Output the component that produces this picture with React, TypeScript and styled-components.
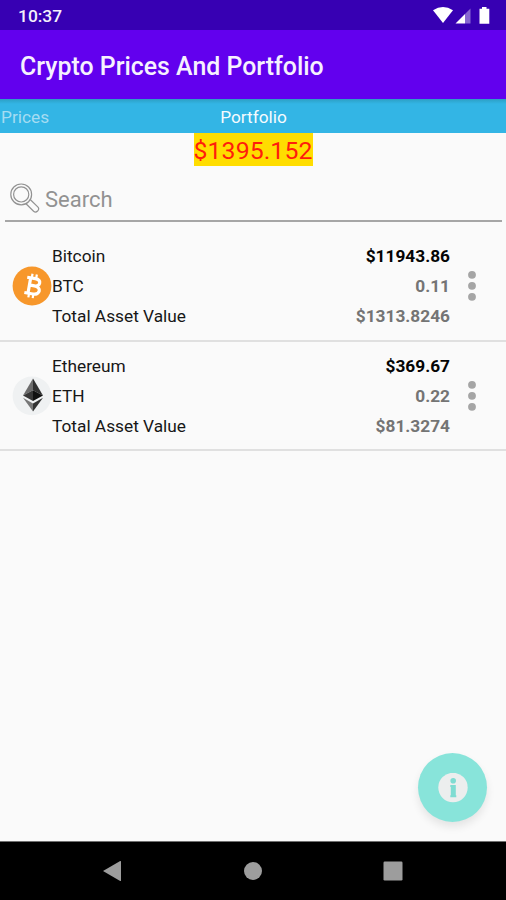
import React from "react";
import styled, { createGlobalStyle } from "styled-components";

const GlobalStyle = createGlobalStyle`
  * { box-sizing: border-box; }
  body { margin: 0; background: #fafafa; font-family: Roboto, sans-serif; }
`;

const Screen = styled.div`
  width: 506px;
  height: 900px;
  display: flex;
  flex-direction: column;
  overflow: hidden;
  background: #fafafa;
`;

const StatusBar = styled.header`
  height: 30px;
  flex: none;
  display: flex;
  align-items: center;
  justify-content: space-between;
  padding: 2px 14px 0 18px;
  background: #3700b3;
  color: #f4f0fb;
`;

const Clock = styled.span`
  font-size: 17.4px;
  line-height: 28px;
  font-weight: 500;
`;

const StatusIcons = styled.svg`
  display: block;
`;

const AppBar = styled.div`
  height: 69px;
  flex: none;
  display: flex;
  align-items: center;
  padding: 4px 20px 0;
  background: #6200ee;
`;

const Title = styled.h1`
  margin: 0;
  color: #f6f1fe;
  font-size: 24.9px;
  font-weight: 500;
  line-height: 32px;
`;

const TabStrip = styled.nav`
  height: 34px;
  flex: none;
  display: grid;
  grid-template-columns: 1fr auto 1fr;
  align-items: center;
  padding: 2px 0 0 1px;
  background: linear-gradient(#2c9fc4 0, #33b5e5 5px);
`;

const Tab = styled.span<{ $active?: boolean }>`
  color: ${(p) => (p.$active ? "#f5fbfe" : "#a5dcf2")};
  font-size: 17.3px;
  line-height: 20px;
`;

const Total = styled.div`
  align-self: center;
  flex: none;
  width: 119px;
  height: 33px;
  background: #ffdd00;
  color: #ff1d0c;
  font-size: 24.8px;
  line-height: 35px;
  letter-spacing: 0.1px;
  text-align: center;
  white-space: nowrap;
`;

const SearchField = styled.label`
  height: 56px;
  flex: none;
  display: flex;
  align-items: center;
  gap: 4px;
  margin: 0 4px 10px 5px;
  padding: 10px 0 0 5px;
  border-bottom: 2px solid #a6a6a6;
`;

const SearchInput = styled.input`
  flex: 1;
  border: 0;
  padding: 4px 0 0 1px;
  outline: 0;
  background: none;
  font: 22px/28px Roboto, sans-serif;
  &::placeholder { color: #929292; opacity: 1; }
`;

const AssetRow = styled.article`
  height: 109.7px;
  flex: none;
  display: grid;
  grid-template-columns: 40px 1fr auto 44px;
  align-items: center;
  padding: 0 12px;
  border-bottom: 2px solid #e0e0e0;
`;

const Lines = styled.div<{ $end?: boolean }>`
  display: flex;
  flex-direction: column;
  align-items: ${(p) => (p.$end ? "flex-end" : "flex-start")};
  padding-top: 1px;
`;

const Line = styled.span<{ $tone?: "strong" | "muted" }>`
  color: ${(p) => (p.$tone === "strong" ? "#050505" : p.$tone ? "#747474" : "#171717")};
  font-size: 17.3px;
  line-height: 30px;
  font-weight: ${(p) => (p.$tone ? 700 : 400)};
`;

const MenuButton = styled.button`
  border: 0;
  background: none;
  padding: 0;
  height: 40px;
  display: flex;
  align-items: center;
  justify-content: center;
`;

const Content = styled.main`
  position: relative;
  flex: 1;
  min-height: 0;
  display: flex;
  flex-direction: column;
`;

const InfoButton = styled.button`
  position: absolute;
  right: 19px;
  bottom: 19px;
  width: 69px;
  height: 69px;
  border: 0;
  padding: 0;
  border-radius: 50%;
  display: grid;
  place-items: center;
  background: #88e4da;
  box-shadow: 0 5px 8px rgba(0, 0, 0, 0.09);
`;

const NavigationBar = styled.footer`
  height: 59px;
  flex: none;
  display: flex;
  align-items: center;
  justify-content: space-between;
  padding: 0 103px 0 102px;
  border-top: 1px solid #707070;
  background: #000;
`;

const NavIcon = styled.svg`
  display: block;
  fill: #9d9d9d;
`;

const Bitcoin = () => (
  <svg width="40" height="40" viewBox="0 0 40 40">
    <circle cx="20" cy="20" r="19.4" fill="#f7972b" />
    <g transform="translate(20.8 20) rotate(10)" fill="none" stroke="#fff">
      <path d="M-7-7.7H1.2C8-7.7 7.8-.4 1.6-.4H-2.5M1.6-.4C9.4-.4 8.8 7.9 1.5 7.9H-7.2M-3.5-7.7V7.9" strokeWidth="3.2" />
      <path d="M-2.4-12V-7M2-12V-7M-2.4 7.5V12M2 7.5V12" strokeWidth="2.2" />
    </g>
  </svg>
);

const Ethereum = () => (
  <svg width="40" height="40" viewBox="0 0 40 40">
    <circle cx="20" cy="19.8" r="19.4" fill="#eff1f2" />
    <path d="M21 2.5 11 19.5 21 14.3Z" fill="#6c6c6c" />
    <path d="M21 2.5 31 19.5 21 14.3Z" fill="#303030" />
    <path d="M11 19.5 21 14.3V25Z" fill="#373737" />
    <path d="M31 19.5 21 14.3V25Z" fill="#111" />
    <path d="M11 21.8 21 27.5V35.5Z" fill="#777" />
    <path d="M31 21.8 21 27.5V35.5Z" fill="#333" />
  </svg>
);

const MoreDots = () => (
  <svg width="10" height="32" viewBox="0 0 10 32" fill="#a5a5a5">
    <circle cx="5" cy="4.8" r="3.9" />
    <circle cx="5" cy="15.8" r="3.9" />
    <circle cx="5" cy="26.8" r="3.9" />
  </svg>
);

const assets = [
  { name: "Bitcoin", symbol: "BTC", price: "$11943.86", amount: "0.11", value: "$1313.8246", Icon: Bitcoin },
  { name: "Ethereum", symbol: "ETH", price: "$369.67", amount: "0.22", value: "$81.3274", Icon: Ethereum },
];

export default function App() {
  return (
    <Screen>
      <GlobalStyle />
      <StatusBar>
        <Clock>10:37</Clock>
        <StatusIcons width="60" height="20" viewBox="0 0 60 20" fill="#fff">
          <path d="M1 4.2Q11-2.2 21 4.2L11 17Z" />
          <path d="M23.5 17.6 33 8V17.6Z" />
          <path d="M33 8 38.5 2.4V17.6H33Z" opacity=".4" />
          <path d="M47.5 2.8H50V1H54.5V2.8H57.3V17.7H47.5Z" />
        </StatusIcons>
      </StatusBar>
      <AppBar><Title>Crypto Prices And Portfolio</Title></AppBar>
      <TabStrip>
        <Tab>Prices</Tab>
        <Tab $active>Portfolio</Tab>
      </TabStrip>
      <Content>
        <Total>$1395.152</Total>
        <SearchField>
          <svg width="30" height="32" viewBox="0 0 30 32" fill="none" stroke="#929292" strokeWidth="1.2">
            <circle cx="11.2" cy="12.4" r="10.4" />
            <circle cx="11.2" cy="12.4" r="7.6" />
            <path d="M16 21.7 23.6 29.2Q25.6 30.9 27.6 29 29.6 27 28 25.1L20.2 17.5" strokeLinejoin="round" />
          </svg>
          <SearchInput placeholder="Search" />
        </SearchField>
        {assets.map(({ name, symbol, price, amount, value, Icon }) => (
          <AssetRow key={symbol}>
            <Icon />
            <Lines>
              <Line>{name}</Line>
              <Line>{symbol}</Line>
              <Line>Total Asset Value</Line>
            </Lines>
            <Lines $end>
              <Line $tone="strong">{price}</Line>
              <Line $tone="muted">{amount}</Line>
              <Line $tone="muted">{value}</Line>
            </Lines>
            <MenuButton aria-label="More"><MoreDots /></MenuButton>
          </AssetRow>
        ))}
        <InfoButton aria-label="Info">
          <svg width="30" height="30" viewBox="0 0 30 30">
            <circle cx="15" cy="14.5" r="14.7" fill="#eceeee" />
            <circle cx="15.2" cy="7.8" r="2.8" fill="#7fdcd2" />
            <path d="M12.3 12H17.8V22.3H18.3V24.2H12.3V22.3H12.8V14H12.3Z" fill="#7fdcd2" />
          </svg>
        </InfoButton>
      </Content>
      <NavigationBar>
        <NavIcon width="20" height="22" viewBox="0 0 20 22"><path d="M1 11 18.2 1Q19 .6 19 1.5V20.5Q19 21.4 18.2 21Z" /></NavIcon>
        <NavIcon width="20" height="20" viewBox="0 0 20 20"><circle cx="10" cy="10" r="9" /></NavIcon>
        <NavIcon width="20" height="20" viewBox="0 0 20 20"><rect x=".5" y=".5" width="19" height="19" rx="1.2" /></NavIcon>
      </NavigationBar>
    </Screen>
  );
}
